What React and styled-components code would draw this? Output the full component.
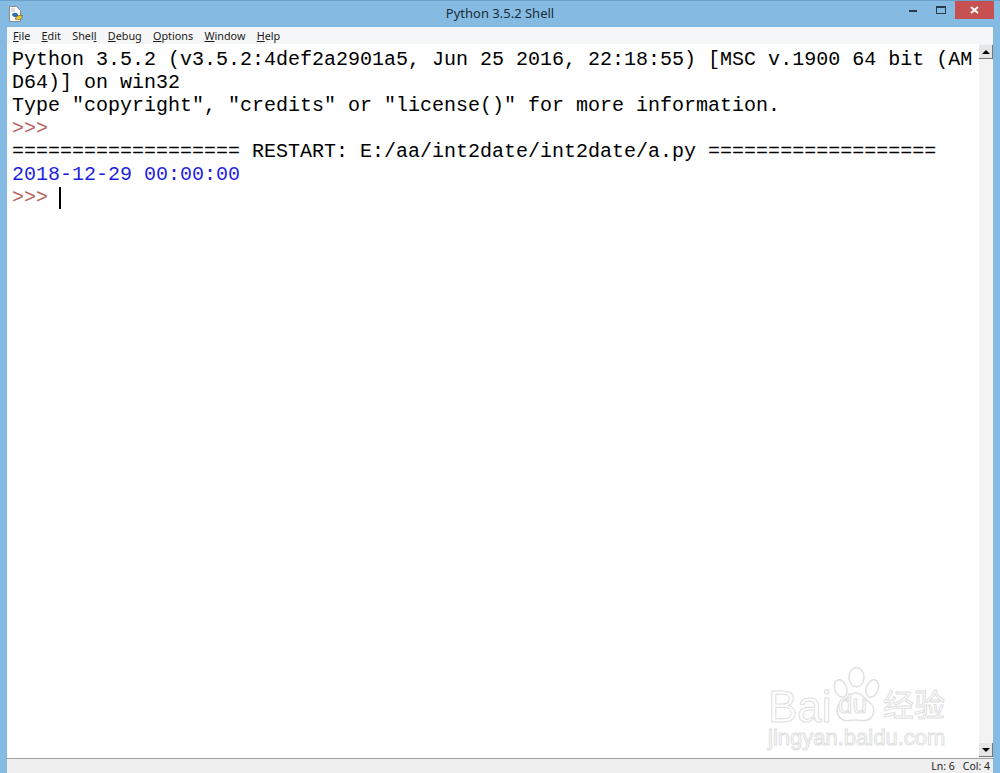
import React from "react";
import styled, { createGlobalStyle } from "styled-components";

const GlobalStyle = createGlobalStyle`
  html, body {
    margin: 0;
    padding: 0;
    height: 100%;
    overflow: hidden;
    background: #85bbe3;
  }
`;

const Window = styled.div`
  width: 1000px;
  height: 773px;
  display: flex;
  flex-direction: column;
  background: #85bbe3;
  box-sizing: border-box;
  border-top: 1px solid #6b9fc8;
  overflow: hidden;
`;

const TitleBar = styled.div`
  height: 26px;
  flex: none;
  display: flex;
  align-items: flex-start;
  position: relative;
  padding: 5px 0 0 8px;
  box-sizing: border-box;
`;

const Title = styled.div`
  position: absolute;
  left: 0;
  right: 0;
  top: 4px;
  text-align: center;
  font: 13px/17px "Noto Sans", "Liberation Sans", sans-serif;
  color: #1c2b38;
`;

const WinControls = styled.div`
  position: absolute;
  right: 6px;
  top: 0;
  display: flex;
  align-items: flex-start;
`;

const WinButton = styled.div`
  width: ${(p) => p.$w}px;
  height: 18px;
  flex: none;
  display: flex;
  align-items: center;
  justify-content: center;
  background: ${(p) => p.$bg || "transparent"};
`;

const Body = styled.div`
  flex: 1;
  display: flex;
  flex-direction: column;
  margin: 0 7px 0 7px;
  min-height: 0;
`;

const MenuBar = styled.div`
  height: 17px;
  flex: none;
  display: flex;
  gap: 11.3px;
  padding-left: 6px;
  background: #f5f6f7;
  align-items: center;
  font: 10.8px/16px "Noto Sans", "Liberation Sans", sans-serif;
  color: #1a1a1a;
`;

const MenuItem = styled.span`
  white-space: pre;
`;

const Editor = styled.div`
  flex: 1;
  display: flex;
  min-height: 0;
  position: relative;
  background: #fff;
`;

const Shell = styled.div`
  flex: 1;
  padding: 4px 0 0 5px;
  font: 20px/23px "Liberation Mono", monospace;
  color: #000;
  overflow: hidden;
`;

const Line = styled.div`
  height: 23px;
  white-space: pre;
  color: ${(p) => p.$color || "#000"};
  display: flex;
  align-items: center;
`;

const Cursor = styled.span`
  display: inline-block;
  width: 2px;
  height: 22px;
  background: #000;
  margin-left: 11px;
`;

const Scrollbar = styled.div`
  width: 14px;
  flex: none;
  display: flex;
  flex-direction: column;
  justify-content: space-between;
  padding: 1px 0;
  background: #f3f3f3;
`;

const ScrollArrow = styled.div`
  height: 14px;
  background: #e6e6e6;
  border-right: 1px solid #777;
  border-bottom: 1px solid #777;
  box-sizing: border-box;
  display: flex;
  align-items: center;
  justify-content: center;

  &::after {
    content: "";
    border-left: 4px solid transparent;
    border-right: 4px solid transparent;
    ${(p) => (p.$down ? "border-top: 4px solid #000;" : "border-bottom: 4px solid #000;")}
  }
`;

const StatusBar = styled.div`
  height: 14px;
  flex: none;
  display: flex;
  justify-content: flex-end;
  align-items: center;
  gap: 8px;
  padding-right: 3px;
  background: #efefef;
  border-top: 1px solid #a0a0a0;
  font: 10.5px/14px "Noto Sans", "Liberation Sans", sans-serif;
  color: #222;
`;

const Watermark = styled.div`
  position: absolute;
  left: 760px;
  top: 620px;
  width: 215px;
  height: 92px;
  pointer-events: none;
`;

const MarkWord = styled.span`
  position: absolute;
  left: ${(p) => p.$x}px;
  top: ${(p) => p.$y}px;
  font: 400 ${(p) => p.$size}px/0.9 "Liberation Sans", "Noto Sans CJK SC", sans-serif;
  color: #fff;
  -webkit-text-stroke: 1px #e0e0e0;
  white-space: nowrap;
`;

const PawSvg = styled.svg`
  position: absolute;
  left: 58px;
  top: 1px;
`;

const PythonIcon = () => (
  <svg width="16" height="17" viewBox="0 0 16 17">
    <path d="M1.5 .5h7l4 4v11h-11z" fill="#fff" stroke="#8a8a8a" />
    <path d="M4 9c0-3 6-3 6 0v2H6z" fill="#2f6db0" />
    <path d="M14 9c1 4-3 6-7 4l2-3z" fill="#e3c83a" stroke="#5a4d10" strokeWidth=".6" />
    <path d="M3 3h4M3 5h4" stroke="#bbb" />
  </svg>
);

const PawMark = () => (
  <PawSvg width="60" height="62" viewBox="0 0 80 80" fill="#fff" stroke="#e0e0e0" strokeWidth="2">
    <ellipse cx="21" cy="30" rx="8" ry="12" transform="rotate(-20 21 30)" />
    <ellipse cx="42" cy="15" rx="10" ry="13" />
    <ellipse cx="63" cy="30" rx="8" ry="12" transform="rotate(20 63 30)" />
    <path d="M41 36c9 0 11 8 19 13 9 6 6 24-9 24-4 0-7-1-10-1s-7 1-11 1c-14 0-18-17-9-24 9-5 11-13 20-13z" />
  </PawSvg>
);

const menus = [
  ["", "F", "ile"],
  ["", "E", "dit"],
  ["Shel", "l", ""],
  ["", "D", "ebug"],
  ["", "O", "ptions"],
  ["", "W", "indow"],
  ["", "H", "elp"],
];

const App = () => {
  return (
    <Window>
      <GlobalStyle />
      <TitleBar>
        <PythonIcon />
        <Title>Python 3.5.2 Shell</Title>
        <WinControls>
          <WinButton $w={28}>
            <svg width="8" height="3"><rect width="8" height="2" y="1" fill="#2b3a48" /></svg>
          </WinButton>
          <WinButton $w={28}>
            <svg width="10" height="8"><rect x=".5" y=".5" width="9" height="7" fill="none" stroke="#2b3a48" /><rect width="10" height="2" fill="#2b3a48" /></svg>
          </WinButton>
          <WinButton $w={39} $bg="#c75050">
            <svg width="9" height="8" viewBox="0 0 9 8"><path d="M1 1l7 6M8 1L1 7" stroke="#fff" strokeWidth="2" /></svg>
          </WinButton>
        </WinControls>
      </TitleBar>
      <Body>
        <MenuBar>
          {menus.map(([before, key, after]) => (
            <MenuItem key={key}>{before}<u>{key}</u>{after}</MenuItem>
          ))}
        </MenuBar>
        <Editor>
          <Shell>
            <Line>Python 3.5.2 (v3.5.2:4def2a2901a5, Jun 25 2016, 22:18:55) [MSC v.1900 64 bit (AM</Line>
            <Line>D64)] on win32</Line>
            <Line>Type "copyright", "credits" or "license()" for more information.</Line>
            <Line $color="#b5655f">&gt;&gt;&gt;</Line>
            <Line>=================== RESTART: E:/aa/int2date/int2date/a.py ===================</Line>
            <Line $color="#1f1fe0">2018-12-29 00:00:00</Line>
            <Line $color="#b5655f">&gt;&gt;&gt;<Cursor /></Line>
          </Shell>
          <Scrollbar>
            <ScrollArrow />
            <ScrollArrow $down />
          </Scrollbar>
          <Watermark>
            <PawMark />
            <MarkWord $x={1} $y={23} $size={44}>Bai</MarkWord>
            <MarkWord $x={71} $y={29} $size={26}>du</MarkWord>
            <MarkWord $x={116} $y={28} $size={31}>经验</MarkWord>
            <MarkWord $x={1} $y={64} $size={22}>jingyan.baidu.com</MarkWord>
          </Watermark>
        </Editor>
        <StatusBar>
          <span>Ln: 6</span>
          <span>Col: 4</span>
        </StatusBar>
      </Body>
    </Window>
  );
};

export default App;
